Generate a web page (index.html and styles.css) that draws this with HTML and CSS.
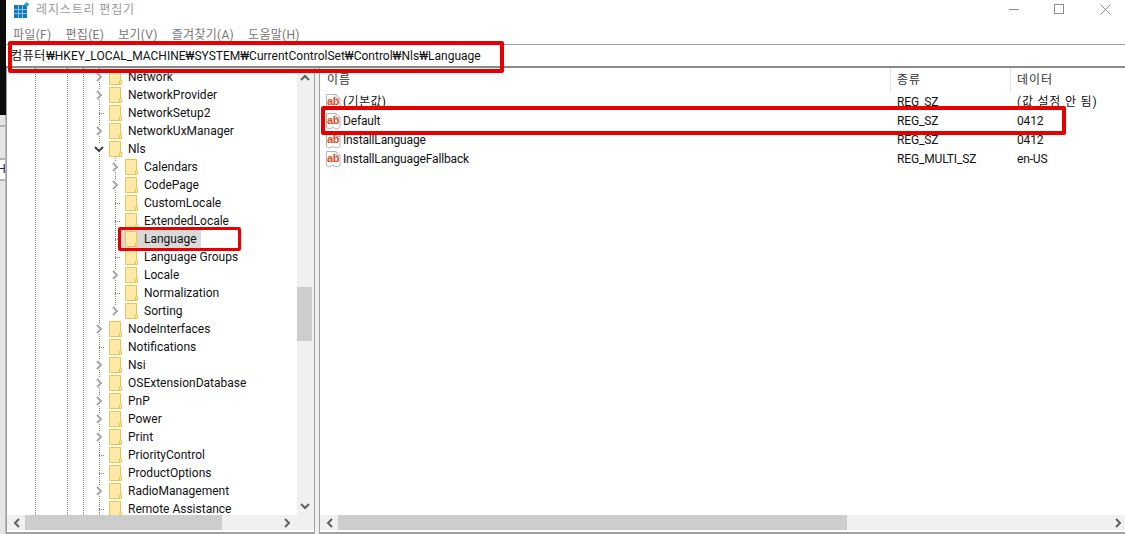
FILE: index.html
```html
<!DOCTYPE html>
<html lang="ko">
<head>
<meta charset="utf-8">
<title>레지스트리 편집기</title>
<link rel="stylesheet" href="styles.css">
</head>
<body>
<svg class="defs" width="0" height="0">
  <defs>
    <symbol id="folder" viewBox="0 0 13 16">
      <path d="M.5 .5H11.500V11.500H12.500V15.500H.5Z" fill="#ffe596" stroke="#edc453"/>
      <path d="M1 1H11V11H9V15H1Z" fill="#ffe9a6"/>
      <path d="M10.500 12V15" stroke="#edc453"/>
    </symbol>
    <symbol id="closed" viewBox="0 0 10 10"><path d="M3 1L7 5L3 9" fill="none" stroke="#a6a6a6" stroke-width="2"/></symbol>
    <symbol id="open" viewBox="0 0 10 10"><path d="M1 3L5 7L9 3" fill="none" stroke="#404040" stroke-width="2"/></symbol>
    <symbol id="ab" viewBox="0 0 16 17">
      <path d="M1.500 .5H11L15 4.500V14.500L12 16L8 14.500L4 16L1.500 14.500Z" fill="#fff" stroke="#b4b4b4"/>
      <path d="M11 .5V4.500H15" fill="none" stroke="#b4b4b4"/>
    </symbol>
  </defs>
</svg>
<div class="app">
  <div class="strip">
    <div class="strip-black"></div>
    <div class="strip-a"></div>
    <div class="strip-b"></div>
    <div class="strip-c">H</div>
    <div class="strip-d"></div>
  </div>
  <div class="window">
    <header class="titlebar">
      <svg class="logo" width="16" height="16" viewBox="0 0 16 16">
        <rect x="0" y="3" width="13" height="13" fill="#1577b8"/>
        <path d="M4.500 3V16M8.500 3V16M0 7.500H13M0 11.500H13" stroke="#7ec3ea" stroke-width="1"/>
        <path d="M12.500 0L15.500 2.500L12.500 5L10 2.500Z" fill="#2a9bd8"/>
      </svg>
      <span class="title">레지스트리 편집기</span>
      <div class="controls">
        <span class="ctl-min"></span>
        <span class="ctl-max"></span>
        <svg class="ctl-close" width="11" height="11" viewBox="0 0 11 11"><path d="M.5 .5L10.500 10.500M10.500 .5L.5 10.500" stroke="#8c8c8c"/></svg>
      </div>
    </header>
    <nav class="menubar">
      <span>파일(F)</span><span>편집(E)</span><span>보기(V)</span><span>즐겨찾기(A)</span><span>도움말(H)</span>
    </nav>
    <div class="address"><span class="addr-root">컴퓨터</span>₩HKEY_LOCAL_MACHINE₩SYSTEM₩CurrentControlSet₩Control₩Nls₩Language</div>
    <main class="panes">
      <section class="tree-pane">
        <div class="tree-body">
          <div class="tree-scroll">
            <i class="guide g1"></i><i class="guide g2"></i><i class="guide g3"></i>
            <i class="guide g4"></i>
            <i class="guide g5"></i>
            <div class="row l1"><svg class="tw"><use href="#closed"/></svg><svg class="fd"><use href="#folder"/></svg><span>Network</span></div>
            <div class="row l1"><svg class="tw"><use href="#closed"/></svg><svg class="fd"><use href="#folder"/></svg><span>NetworkProvider</span></div>
            <div class="row l1"><i class="dash"></i><svg class="fd"><use href="#folder"/></svg><span>NetworkSetup2</span></div>
            <div class="row l1"><svg class="tw"><use href="#closed"/></svg><svg class="fd"><use href="#folder"/></svg><span>NetworkUxManager</span></div>
            <div class="row l1"><svg class="tw"><use href="#open"/></svg><svg class="fd"><use href="#folder"/></svg><span>Nls</span></div>
            <div class="row l2"><svg class="tw"><use href="#closed"/></svg><svg class="fd"><use href="#folder"/></svg><span>Calendars</span></div>
            <div class="row l2"><svg class="tw"><use href="#closed"/></svg><svg class="fd"><use href="#folder"/></svg><span>CodePage</span></div>
            <div class="row l2"><i class="dash"></i><svg class="fd"><use href="#folder"/></svg><span>CustomLocale</span></div>
            <div class="row l2"><i class="dash"></i><svg class="fd"><use href="#folder"/></svg><span>ExtendedLocale</span></div>
            <div class="row l2 sel"><i class="dash"></i><div class="sel-box"><svg class="fd"><use href="#folder"/></svg><span>Language</span></div></div>
            <div class="row l2"><i class="dash"></i><svg class="fd"><use href="#folder"/></svg><span>Language Groups</span></div>
            <div class="row l2"><svg class="tw"><use href="#closed"/></svg><svg class="fd"><use href="#folder"/></svg><span>Locale</span></div>
            <div class="row l2"><i class="dash"></i><svg class="fd"><use href="#folder"/></svg><span>Normalization</span></div>
            <div class="row l2"><svg class="tw"><use href="#closed"/></svg><svg class="fd"><use href="#folder"/></svg><span>Sorting</span></div>
            <div class="row l1"><svg class="tw"><use href="#closed"/></svg><svg class="fd"><use href="#folder"/></svg><span>NodeInterfaces</span></div>
            <div class="row l1"><i class="dash"></i><svg class="fd"><use href="#folder"/></svg><span>Notifications</span></div>
            <div class="row l1"><svg class="tw"><use href="#closed"/></svg><svg class="fd"><use href="#folder"/></svg><span>Nsi</span></div>
            <div class="row l1"><svg class="tw"><use href="#closed"/></svg><svg class="fd"><use href="#folder"/></svg><span>OSExtensionDatabase</span></div>
            <div class="row l1"><svg class="tw"><use href="#closed"/></svg><svg class="fd"><use href="#folder"/></svg><span>PnP</span></div>
            <div class="row l1"><svg class="tw"><use href="#closed"/></svg><svg class="fd"><use href="#folder"/></svg><span>Power</span></div>
            <div class="row l1"><svg class="tw"><use href="#closed"/></svg><svg class="fd"><use href="#folder"/></svg><span>Print</span></div>
            <div class="row l1"><i class="dash"></i><svg class="fd"><use href="#folder"/></svg><span>PriorityControl</span></div>
            <div class="row l1"><i class="dash"></i><svg class="fd"><use href="#folder"/></svg><span>ProductOptions</span></div>
            <div class="row l1"><svg class="tw"><use href="#closed"/></svg><svg class="fd"><use href="#folder"/></svg><span>RadioManagement</span></div>
            <div class="row l1"><i class="dash"></i><svg class="fd"><use href="#folder"/></svg><span>Remote Assistance</span></div>
          </div>
          <div class="vbar">
            <svg class="arrow" width="10" height="7" viewBox="0 0 10 7"><path d="M1 6L5 2L9 6" fill="none" stroke="#606060" stroke-width="2"/></svg>
            <div class="vtrack"><div class="vthumb"></div></div>
            <svg class="arrow" width="10" height="7" viewBox="0 0 10 7"><path d="M1 1L5 5L9 1" fill="none" stroke="#606060" stroke-width="2"/></svg>
          </div>
        </div>
        <div class="hbar hbar-tree">
          <svg class="harrow" width="7" height="10" viewBox="0 0 7 10"><path d="M6 1L2 5L6 9" fill="none" stroke="#606060" stroke-width="2"/></svg>
          <div class="htrack"><div class="hthumb left"></div></div>
          <svg class="harrow" width="7" height="10" viewBox="0 0 7 10"><path d="M1 1L5 5L1 9" fill="none" stroke="#606060" stroke-width="2"/></svg>
        </div>
      </section>
      <section class="list-pane">
        <div class="list-body">
          <div class="list-head">
            <div class="c-name">이름</div><div class="c-type">종류</div><div class="c-data">데이터</div>
          </div>
          <div class="list-row"><div class="c-name ko"><svg class="ab"><use href="#ab"/></svg><b class="ab-t">ab</b>(기본값)</div><div class="c-type">REG_SZ</div><div class="c-data ko-wide">(값 설정 안 됨)</div></div>
          <div class="list-row"><div class="c-name"><svg class="ab"><use href="#ab"/></svg><b class="ab-t">ab</b>Default</div><div class="c-type">REG_SZ</div><div class="c-data">0412</div></div>
          <div class="list-row"><div class="c-name"><svg class="ab"><use href="#ab"/></svg><b class="ab-t">ab</b>InstallLanguage</div><div class="c-type">REG_SZ</div><div class="c-data">0412</div></div>
          <div class="list-row"><div class="c-name"><svg class="ab"><use href="#ab"/></svg><b class="ab-t">ab</b>InstallLanguageFallback</div><div class="c-type">REG_MULTI_SZ</div><div class="c-data">en-US</div></div>
        </div>
        <div class="hbar hbar-list">
          <svg class="harrow" width="7" height="10" viewBox="0 0 7 10"><path d="M6 1L2 5L6 9" fill="none" stroke="#606060" stroke-width="2"/></svg>
          <div class="htrack"><div class="hthumb right"></div></div>
          <svg class="harrow" width="7" height="10" viewBox="0 0 7 10"><path d="M1 1L5 5L1 9" fill="none" stroke="#606060" stroke-width="2"/></svg>
        </div>
      </section>
    </main>
  </div>
  <div class="mark m-address"></div>
  <div class="mark m-default"></div>
  <div class="mark m-language"></div>
</div>
</body>
</html>
```
FILE: styles.css
```css
* { box-sizing: border-box; }
html, body { margin: 0; padding: 0; }
body {
  width: 1125px; height: 534px; overflow: hidden; background: #fff;
  font: 12px/18px Roboto, "Noto Sans CJK KR", sans-serif; color: #111;
}
.defs { position: absolute; }
.app { position: relative; display: flex; width: 1125px; height: 534px; overflow: hidden; }
.strip { width: 6px; flex: none; display: flex; flex-direction: column; background: #e6e6e6; border-right: 1px solid #b8b8b8; }
.strip-black { height: 115px; background: #0c0c0c; margin-right: -1px; }
.strip-a { height: 12px; border-bottom: 2px solid #b4b4b4; }
.strip-b { height: 33px; border-bottom: 2px solid #b4b4b4; }
.strip-c { height: 21px; border-bottom: 2px solid #b4b4b4; font: 12px/19px "Liberation Sans", sans-serif; color: #23235a; background: #fff; overflow: hidden; text-indent: -3px; }
.strip-d { flex: 1; }
.window { flex: 1; min-width: 0; display: flex; flex-direction: column; background: #fff; }
.titlebar { height: 24px; flex: none; display: flex; align-items: center; padding-left: 8px; }
.logo { flex: none; margin-top: -4px; }
.title { margin-left: 6px; margin-top: -4px; color: #9a9a9a; letter-spacing: .85px; }
.controls { margin-left: auto; display: flex; align-items: center; margin-top: -6px; }
.ctl-min { width: 10px; height: 1px; background: #8c8c8c; margin-right: 35px; }
.ctl-max { width: 10px; height: 10px; border: 1px solid #8c8c8c; margin-right: 36px; }
.ctl-close { margin-right: 14px; }
.menubar { height: 20px; flex: none; display: flex; gap: 14px; padding-left: 7px; color: #777; line-height: 22px; letter-spacing: .3px; }
.address {
  height: 24px; flex: none; padding-left: 5px; line-height: 23px;
  border-top: 1px solid #a0a0a0; border-bottom: 2px solid #8a8a8a; color: #111;
}
.addr-root { letter-spacing: .6px; }
.panes { flex: 1; min-height: 0; display: flex; gap: 4px; background: #f0f0f0; }
.tree-pane, .list-pane { display: flex; flex-direction: column; background: #fff; min-width: 0; padding-bottom: 2px; }
.tree-pane { width: 309px; border: 1px solid #a0a0a0; border-width: 0 1px 2px 1px; }
.list-pane { flex: 1; border: 1px solid #a0a0a0; border-width: 0 0 2px 1px; }
.tree-body { flex: 1; min-height: 0; display: flex; }
.tree-scroll { position: relative; flex: 1; min-width: 0; overflow: hidden; }
.guide { position: absolute; width: 1px; border-left: 1px dotted #808080; }
.g1 { left: 28px; top: 0; bottom: 0; }
.g2 { left: 60px; top: 0; bottom: 0; }
.g3 { left: 76px; top: 0; bottom: 0; }
.g4 { left: 92px; top: 0; bottom: 0; }
.g5 { left: 108px; top: 90px; height: 155px; }
.row { position: relative; height: 18px; display: flex; align-items: center; white-space: nowrap; }
.l1 { padding-left: 87px; }
.l2 { padding-left: 103px; }
.tw { width: 10px; height: 10px; flex: none; background: #fff; }
.dash { display: block; height: 1px; flex: none; border-top: 1px dotted #808080; margin-left: 5px; width: 5px; }
.fd { width: 13px; height: 16px; flex: none; margin-left: 5px; background: #fff; }
.row span { margin-left: 4px; padding: 0 2px; line-height: 18px; background: #fff; }
.sel-box { display: flex; align-items: center; height: 18px; background: #d9d9d9; }
.sel-box .fd { background: none; }
.sel-box span { background: none; padding-right: 4px; }
.vbar { width: 17px; flex: none; background: #f0f0f0; display: flex; flex-direction: column; align-items: center; padding: 6px 2px 5px 0; }
.arrow { flex: none; }
.vtrack { flex: 1; width: 100%; padding-top: 206px; }
.vthumb { height: 54px; background: #cdcdcd; }
.hbar { height: 15px; flex: none; background: #f0f0f0; display: flex; align-items: center; }
.hbar-tree { padding: 0 23px 0 6px; }
.hbar-list { padding: 0 3px 0 6px; }
.harrow { flex: none; }
.htrack { flex: 1; height: 100%; margin: 0 6px 0 5px; }
.hthumb { height: 100%; background: #cdcdcd; }
.hthumb.left { width: 197px; }
.hthumb.right { width: 509px; }
.list-body { flex: 1; min-height: 0; }
.list-head, .list-row { display: flex; align-items: center; white-space: nowrap; }
.list-head { height: 24px; color: #333; letter-spacing: 1px; }
.list-head .c-name { padding-left: 7px; }
.list-head .c-type, .list-head .c-data { border-left: 1px solid #e5e5e5; height: 24px; line-height: 24px; padding-left: 6px; }
.list-row { height: 19px; letter-spacing: -.15px; }
.list-row .ko { letter-spacing: .4px; }
.list-row .ko-wide { letter-spacing: .8px; }
.c-name { width: 570px; flex: none; position: relative; display: flex; align-items: center; }
.list-row .c-name { padding-left: 23px; }
.c-type { width: 120px; flex: none; }
.list-row .c-type { padding-left: 7px; }
.list-row .c-data { padding-left: 7px; }
.c-data { flex: 1; }
.ab { position: absolute; left: 5px; top: 1px; width: 16px; height: 17px; }
.ab-t { position: absolute; left: 7px; top: 0; font: 700 11px/16px "Liberation Sans", sans-serif; color: #dc4a1e; letter-spacing: -.3px; }
.mark { position: absolute; border: 4px solid #e60000; border-radius: 2px; }
.m-address { left: 8px; top: 41px; width: 496px; height: 32px; }
.m-default { left: 321px; top: 106px; width: 745px; height: 29px; }
.m-language { left: 118px; top: 227px; width: 123px; height: 24px; border-width: 3px; }
```
